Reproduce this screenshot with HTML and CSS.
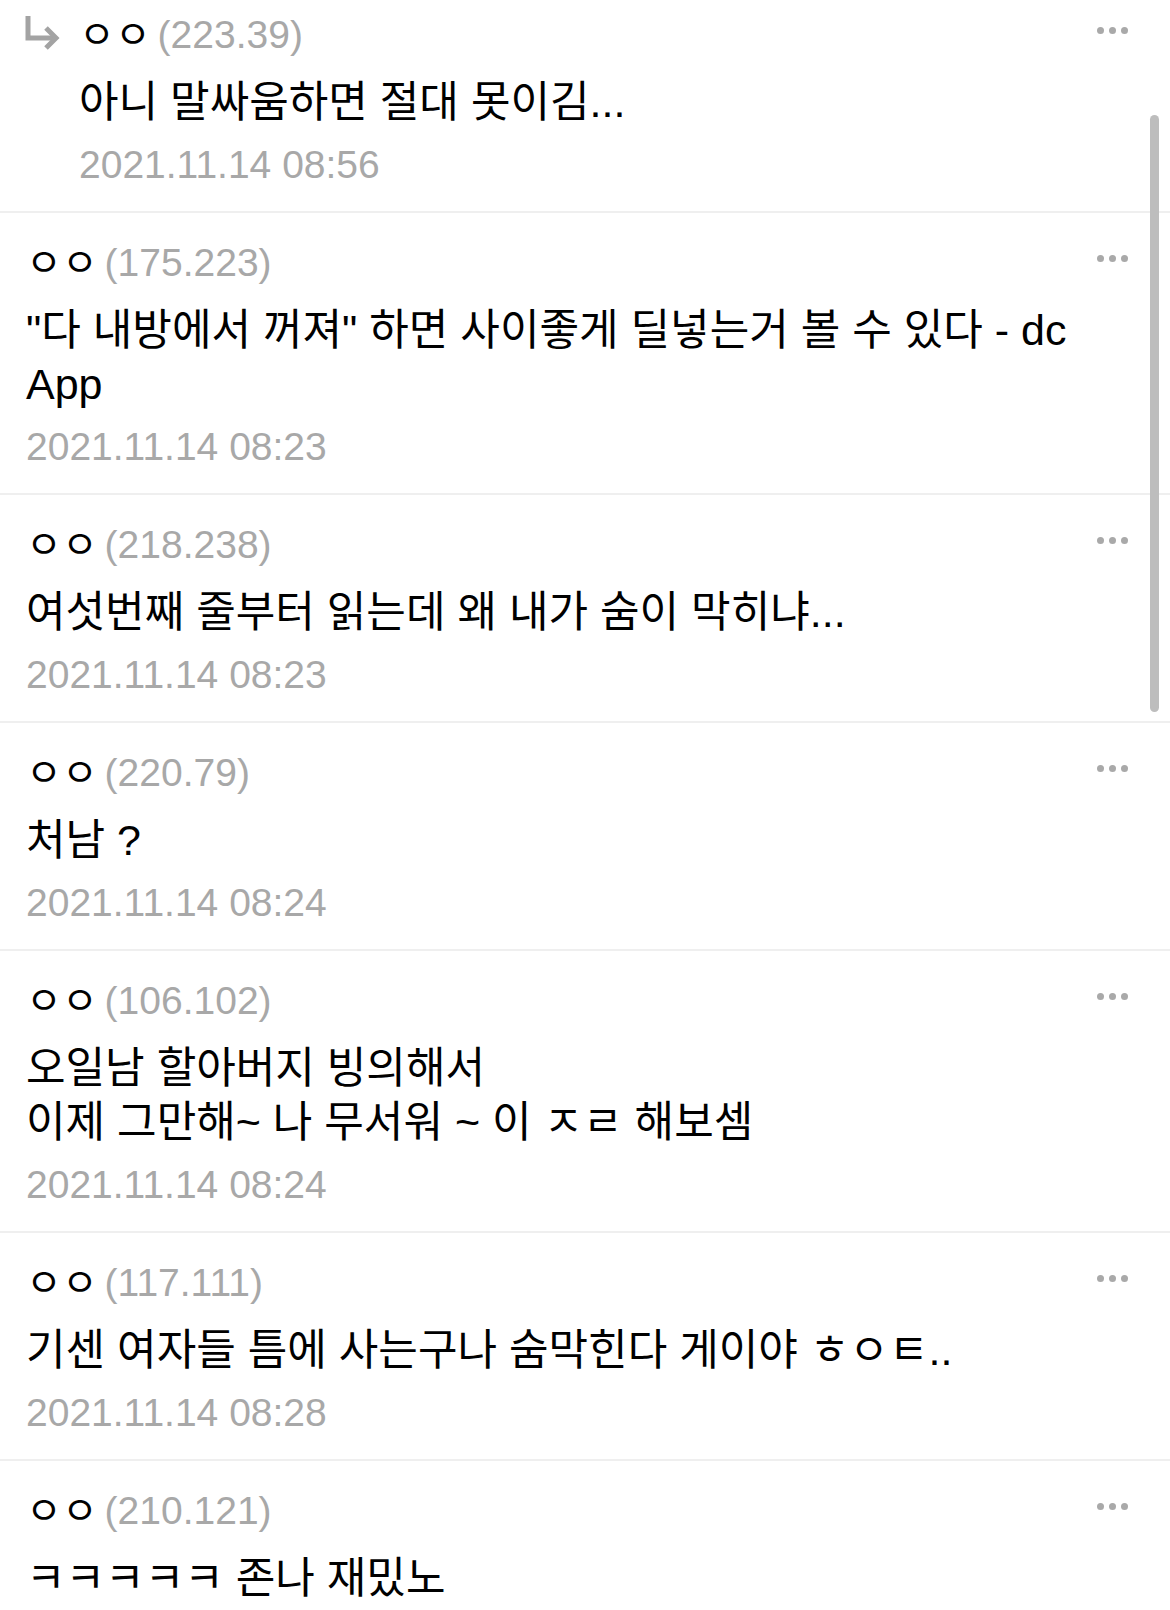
FILE: index.html
```html
<!DOCTYPE html>
<html lang="ko">
<head>
<meta charset="utf-8">
<title>댓글</title>
<link rel="stylesheet" href="styles.css">
</head>
<body>
<div class="thread">
  <div class="comment reply">
    <div class="gutter">
      <svg class="reply-arrow" width="40" height="50" viewBox="0 0 40 50"><path d="M5 6 V28 H32" fill="none" stroke="#a3a3a3" stroke-width="5"/><path d="M23 18 L33 28 L23 38" fill="none" stroke="#a3a3a3" stroke-width="5"/></svg>
    </div>
    <div class="main">
      <div class="head"><span class="author"><span class="nick">ㅇㅇ</span> <span class="ip">(223.39)</span></span><span class="more"><i></i><i></i><i></i></span></div>
      <div class="text">아니 말싸움하면 절대 못이김...</div>
      <div class="date">2021.11.14 08:56</div>
    </div>
  </div>
  <div class="comment">
    <div class="main">
      <div class="head"><span class="author"><span class="nick">ㅇㅇ</span> <span class="ip">(175.223)</span></span><span class="more"><i></i><i></i><i></i></span></div>
      <div class="text">"다 내방에서 꺼져" 하면 사이좋게 딜넣는거 볼 수 있다 - dc App</div>
      <div class="date">2021.11.14 08:23</div>
    </div>
  </div>
  <div class="comment">
    <div class="main">
      <div class="head"><span class="author"><span class="nick">ㅇㅇ</span> <span class="ip">(218.238)</span></span><span class="more"><i></i><i></i><i></i></span></div>
      <div class="text">여섯번째 줄부터 읽는데 왜 내가 숨이 막히냐...</div>
      <div class="date">2021.11.14 08:23</div>
    </div>
  </div>
  <div class="comment">
    <div class="main">
      <div class="head"><span class="author"><span class="nick">ㅇㅇ</span> <span class="ip">(220.79)</span></span><span class="more"><i></i><i></i><i></i></span></div>
      <div class="text">처남 ?</div>
      <div class="date">2021.11.14 08:24</div>
    </div>
  </div>
  <div class="comment">
    <div class="main">
      <div class="head"><span class="author"><span class="nick">ㅇㅇ</span> <span class="ip">(106.102)</span></span><span class="more"><i></i><i></i><i></i></span></div>
      <div class="text">오일남 할아버지 빙의해서<br>이제 그만해~ 나 무서워 ~ 이 ㅈㄹ 해보셈</div>
      <div class="date">2021.11.14 08:24</div>
    </div>
  </div>
  <div class="comment">
    <div class="main">
      <div class="head"><span class="author"><span class="nick">ㅇㅇ</span> <span class="ip">(117.111)</span></span><span class="more"><i></i><i></i><i></i></span></div>
      <div class="text">기센 여자들 틈에 사는구나 숨막힌다 게이야 ㅎㅇㅌ..</div>
      <div class="date">2021.11.14 08:28</div>
    </div>
  </div>
  <div class="comment">
    <div class="main">
      <div class="head"><span class="author"><span class="nick">ㅇㅇ</span> <span class="ip">(210.121)</span></span><span class="more"><i></i><i></i><i></i></span></div>
      <div class="text">ㅋㅋㅋㅋㅋ 존나 재밌노</div>
    </div>
  </div>
</div>
<div class="scrollbar"></div>
</body>
</html>
```

FILE: styles.css
```css
* {
  box-sizing: border-box;
  margin: 0;
  padding: 0;
}

html, body {
  width: 1170px;
  height: 1610px;
  overflow: hidden;
  background: #ffffff;
}

body {
  position: relative;
  font-family: "Liberation Sans", "Noto Sans CJK KR", sans-serif;
  color: #000000;
}

.thread {
  margin-top: -15px;
}

.comment {
  display: flex;
  padding: 25px 42px 23px 26px;
  border-bottom: 2px solid #efefef;
}

.comment.reply {
  padding-left: 23px;
}

.gutter {
  flex: none;
  width: 56px;
}

.reply-arrow {
  display: block;
}

.main {
  flex: 1;
  min-width: 0;
  display: flex;
  flex-direction: column;
}

.head {
  display: flex;
  align-items: center;
  justify-content: space-between;
  height: 50px;
  margin-bottom: 15px;
}

.author {
  font-size: 39px;
  line-height: 50px;
  white-space: nowrap;
}

.nick {
  color: #000000;
  margin-right: -4px;
}

.ip {
  color: #a8a8a8;
}

.more {
  display: flex;
  gap: 5px;
  margin-bottom: 10px;
}

.more i {
  display: block;
  width: 7px;
  height: 7px;
  border-radius: 50%;
  background: #a9a9a9;
}

.text {
  font-size: 43px;
  line-height: 54px;
}

.date {
  margin-top: 13px;
  font-size: 39px;
  line-height: 46px;
  color: #a8a8a8;
}

.scrollbar {
  position: absolute;
  top: 115px;
  right: 11px;
  width: 9px;
  height: 597px;
  border-radius: 5px;
  background: #bdbdbd;
}
```
